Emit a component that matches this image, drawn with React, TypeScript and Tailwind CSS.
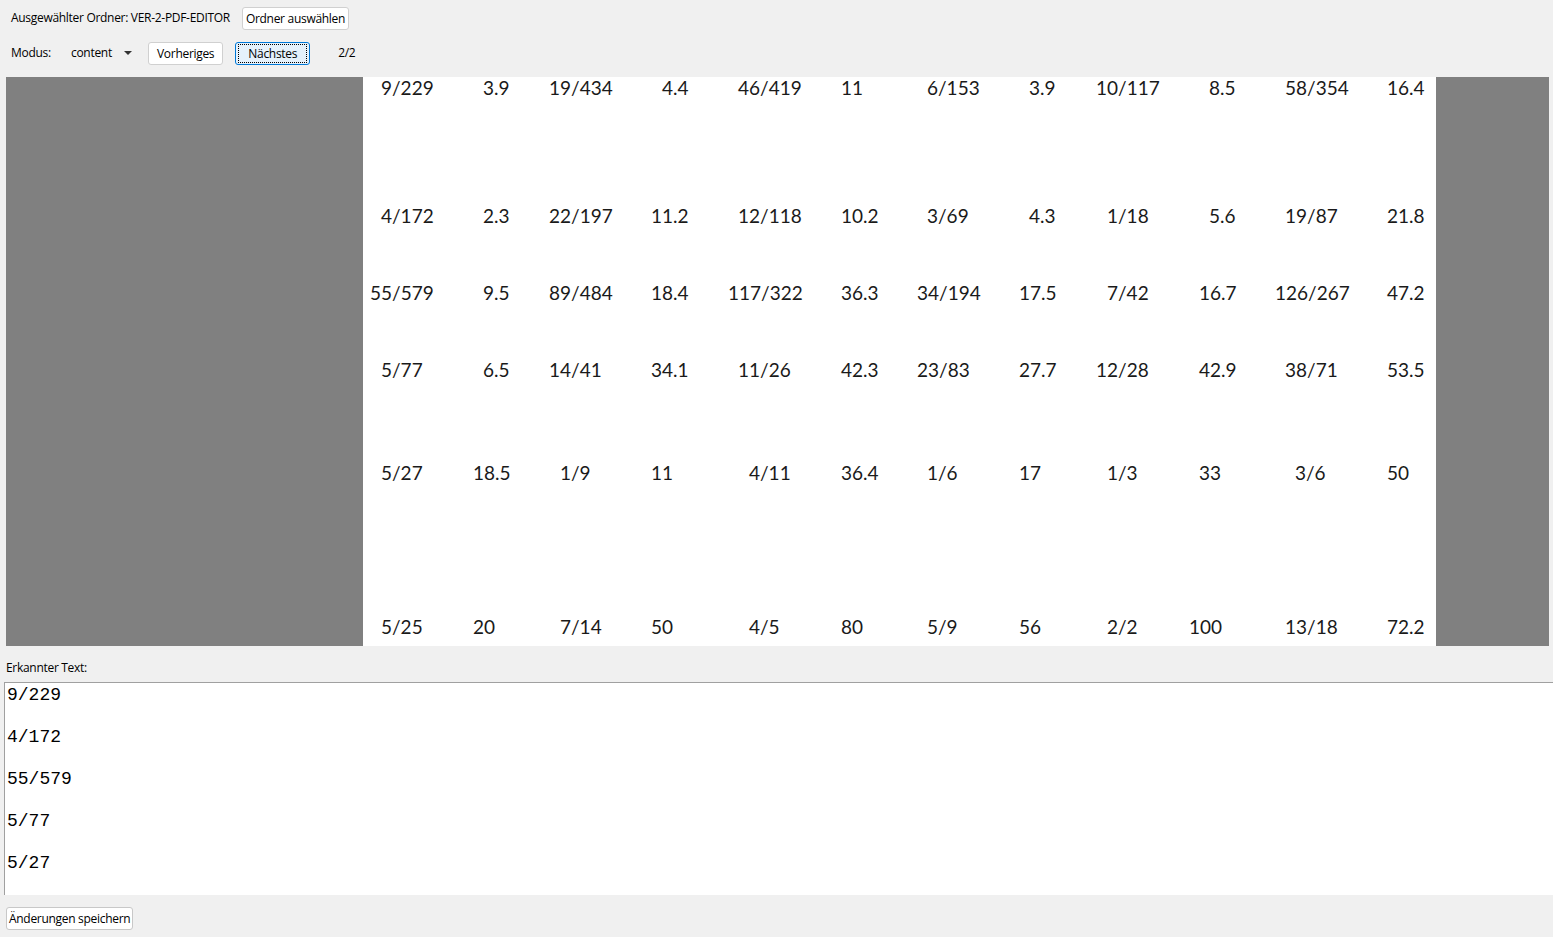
import React, { useState } from "react";

type Cell = [number, string];

// positions of the recognised numbers on the rendered page (page-local px)
const pageRows: { top: number; cells: Cell[] }[] = [
  {
    top: -1,
    cells: [[381, "9/229"], [483, "3.9"], [549, "19/434"], [662, "4.4"], [738, "46/419"], [841, "11"], [927, "6/153"], [1029, "3.9"], [1096, "10/117"], [1209, "8.5"], [1285, "58/354"], [1387, "16.4"]],
  },
  {
    top: 127,
    cells: [[381, "4/172"], [483, "2.3"], [549, "22/197"], [651, "11.2"], [738, "12/118"], [841, "10.2"], [927, "3/69"], [1029, "4.3"], [1107, "1/18"], [1209, "5.6"], [1285, "19/87"], [1387, "21.8"]],
  },
  {
    top: 204,
    cells: [[370, "55/579"], [483, "9.5"], [549, "89/484"], [651, "18.4"], [728, "117/322"], [841, "36.3"], [917, "34/194"], [1019, "17.5"], [1107, "7/42"], [1199, "16.7"], [1275, "126/267"], [1387, "47.2"]],
  },
  {
    top: 281,
    cells: [[381, "5/77"], [483, "6.5"], [549, "14/41"], [651, "34.1"], [738, "11/26"], [841, "42.3"], [917, "23/83"], [1019, "27.7"], [1096, "12/28"], [1199, "42.9"], [1285, "38/71"], [1387, "53.5"]],
  },
  {
    top: 384,
    cells: [[381, "5/27"], [473, "18.5"], [560, "1/9"], [651, "11"], [749, "4/11"], [841, "36.4"], [927, "1/6"], [1019, "17"], [1107, "1/3"], [1199, "33"], [1295, "3/6"], [1387, "50"]],
  },
  {
    top: 538,
    cells: [[381, "5/25"], [473, "20"], [560, "7/14"], [651, "50"], [749, "4/5"], [841, "80"], [927, "5/9"], [1019, "56"], [1107, "2/2"], [1189, "100"], [1285, "13/18"], [1387, "72.2"]],
  },
];

const recognised = "9/229\n\n4/172\n\n55/579\n\n5/77\n\n5/27\n\n5/25";

function WinButton({ label, focused }: { label: string; focused?: boolean }) {
  if (focused) {
    return (
      <button className="h-[23px] px-[2px] rounded-[3px] border border-[#0078d7] bg-[#e5f1fb] text-[12px] text-black">
        <span className="block px-[9px] leading-[17px] border border-dotted border-black">
          {label}
        </span>
      </button>
    );
  }
  return (
    <button className="h-[23px] px-[8px] rounded-[3px] border border-[#d0d0d0] bg-white text-[12px] leading-[17px] text-black">
      {label}
    </button>
  );
}

export default function App() {
  const [text, setText] = useState(recognised);

  return (
    <div className="h-[937px] w-full overflow-hidden bg-[#f0f0f0] flex flex-col font-['Open_Sans',sans-serif] text-[12px] tracking-[-0.3px] text-black">
      {/* FOLDER ROW */}
      <div className="h-[36px] flex items-center pl-[11px] gap-[12px]">
        <span>Ausgewählter Ordner: VER-2-PDF-EDITOR</span>
        <button className="h-[23px] px-[3px] rounded-[3px] border border-[#d0d0d0] bg-white text-[12px] leading-[17px]">
          Ordner auswählen
        </button>
      </div>

      {/* MODE / NAV ROW */}
      <div className="h-[34px] flex items-center pl-[11px]">
        <span className="w-[60px]">Modus:</span>
        <div className="w-[77px] flex items-center">
          <span>content</span>
          <svg width="8" height="4" viewBox="0 0 8 4" className="ml-[12px]">
            <path d="M0 0h8L4 4z" fill="#333" />
          </svg>
        </div>
        <WinButton label="Vorheriges" />
        <div className="w-[12px]" />
        <WinButton label="Nächstes" focused />
        <span className="ml-[28px]">2/2</span>
      </div>

      {/* PAGE VIEWER */}
      <div className="mt-[7px] ml-[6px] mr-[4px] h-[569px] bg-[#808080] flex">
        <div className="ml-[357px] w-[1073px] h-full bg-white relative overflow-hidden font-['Lato',sans-serif] text-[19px] leading-[22px] tracking-normal text-[#1a1a1a]">
          {pageRows.map((row) =>
            row.cells.map(([x, value]) => (
              <span
                key={`${row.top}-${x}`}
                className="absolute whitespace-nowrap"
                style={{ left: x - 363, top: row.top + 1 }}
              >
                {value}
              </span>
            ))
          )}
        </div>
      </div>

      {/* RECOGNISED TEXT */}
      <div className="h-[36px] pl-[6px] pt-[13px] leading-[17px]">Erkannter Text:</div>
      <textarea
        value={text}
        onChange={(e) => setText(e.target.value)}
        className="ml-[4px] h-[213px] w-[calc(100%-4px)] resize-none overflow-hidden bg-white border-l border-t border-[#a0a0a0] pl-[2px] pt-[2px] font-['Liberation_Mono',monospace] text-[18px] leading-[21px] tracking-normal text-black outline-none"
      />

      {/* FOOTER */}
      <div className="pl-[6px] pt-[12px]">
        <button className="h-[23px] px-[2px] rounded-[3px] border border-[#c8c8c8] bg-white text-[12px] leading-[17px]">
          Änderungen speichern
        </button>
      </div>
    </div>
  );
}
